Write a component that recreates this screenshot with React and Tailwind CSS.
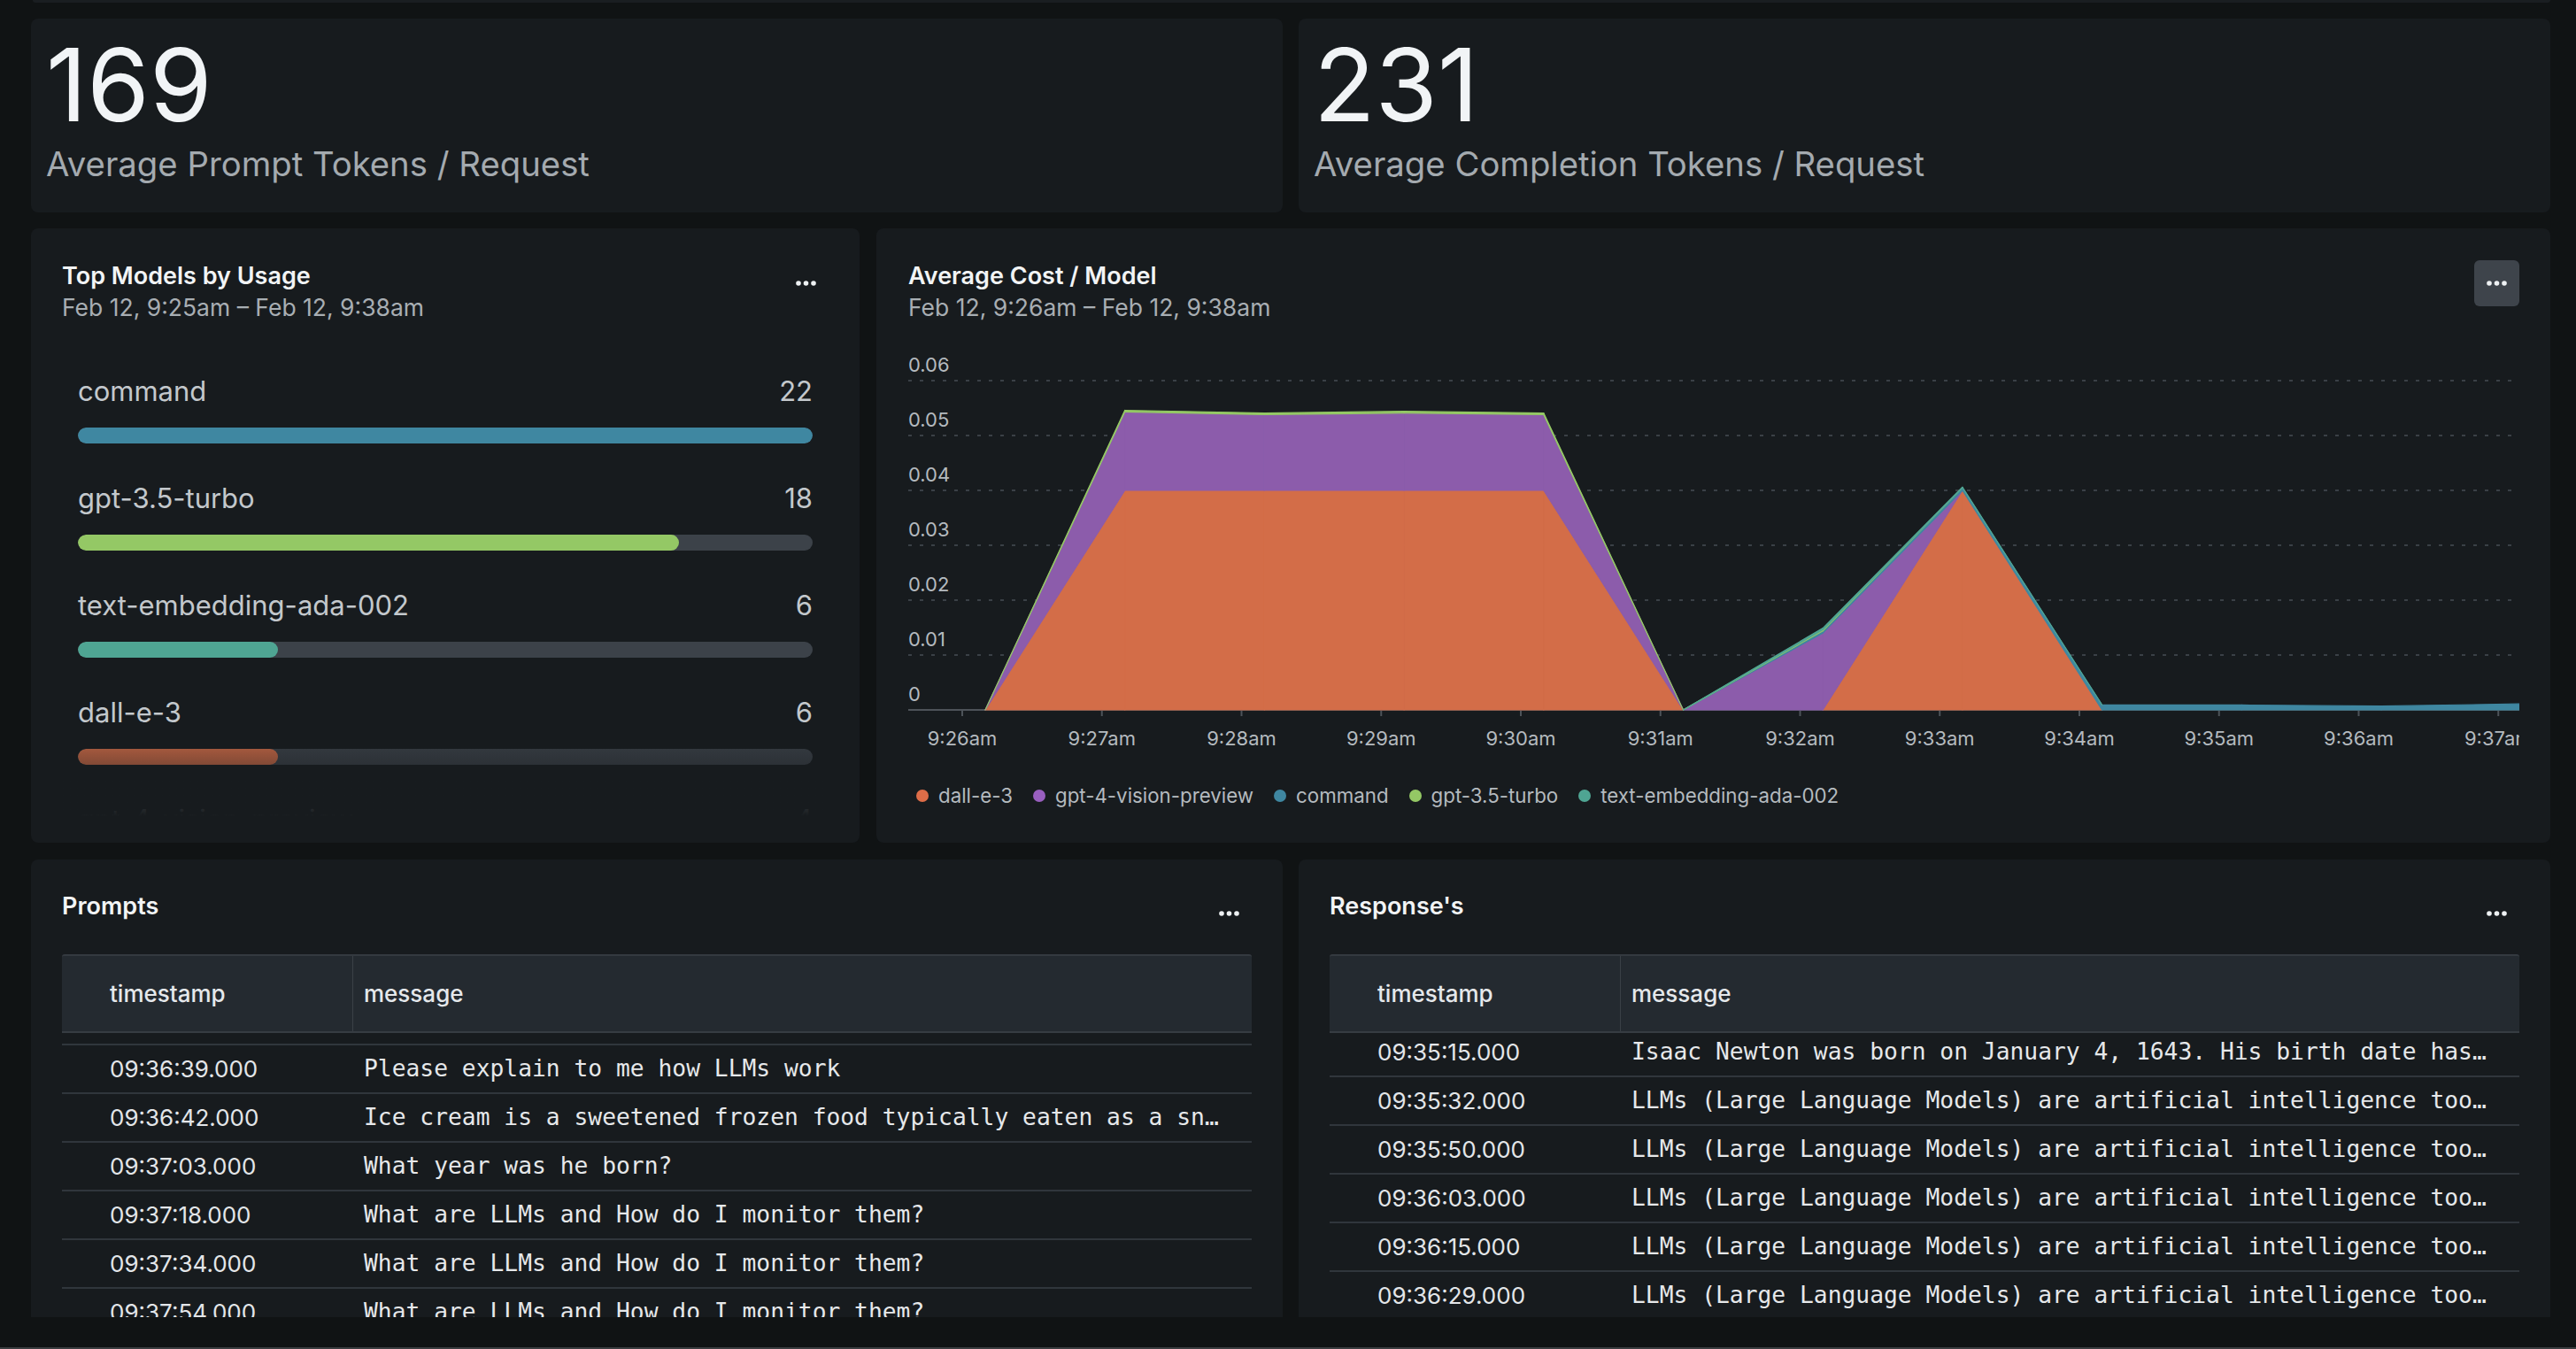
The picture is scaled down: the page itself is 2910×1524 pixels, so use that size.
import React from 'react';

const models = [
  { name: 'command', value: 22, color: 'bg-[#3f87a1]' },
  { name: 'gpt-3.5-turbo', value: 18, color: 'bg-[#94c865]' },
  { name: 'text-embedding-ada-002', value: 6, color: 'bg-[#4fa593]' },
  { name: 'dall-e-3', value: 6, color: 'bg-[#d36d48]' },
  { name: 'gpt-4-vision-preview', value: 4, color: 'bg-[#8c5cab]' },
];

const series = [
  { name: 'dall-e-3', color: '#d36d48', dot: 'bg-[#de6d48]', values: [0, 0.04, 0.04, 0.04, 0.04, 0, 0, 0.04, 0, 0, 0, 0] },
  { name: 'gpt-4-vision-preview', color: '#8c5cab', dot: 'bg-[#995fbf]', values: [0, 0.0143, 0.0138, 0.0141, 0.0138, 0, 0.014, 0, 0, 0, 0, 0] },
  { name: 'command', color: '#3f87a1', dot: 'bg-[#3f87a1]', values: [0, 0, 0, 0, 0, 0, 0.0004, 0.0005, 0.0009, 0.0009, 0.0007, 0.0011] },
  { name: 'gpt-3.5-turbo', color: '#94c865', dot: 'bg-[#94c865]', values: [0, 0.0003, 0.0003, 0.0003, 0.0003, 0, 0.0002, 0, 0, 0, 0, 0] },
  { name: 'text-embedding-ada-002', color: '#4fa593', dot: 'bg-[#4fa593]', values: [0, 0, 0, 0, 0, 0, 0.0003, 0.0001, 0, 0, 0, 0] },
];

const ticks = ['9:26am', '9:27am', '9:28am', '9:29am', '9:30am', '9:31am', '9:32am', '9:33am', '9:34am', '9:35am', '9:36am', '9:37am'];

const prompts = [
  ['09:36:21.000', 'What are LLMs and How do I monitor them?'],
  ['09:36:39.000', 'Please explain to me how LLMs work'],
  ['09:36:42.000', 'Ice cream is a sweetened frozen food typically eaten as a snack or dessert.'],
  ['09:37:03.000', 'What year was he born?'],
  ['09:37:18.000', 'What are LLMs and How do I monitor them?'],
  ['09:37:34.000', 'What are LLMs and How do I monitor them?'],
  ['09:37:54.000', 'What are LLMs and How do I monitor them?'],
];

const llm = 'LLMs (Large Language Models) are artificial intelligence tools that can read, summarize and generate text.';
const responses = [
  ['09:35:15.000', 'Isaac Newton was born on January 4, 1643. His birth date has been recorded differently over time.'],
  ['09:35:32.000', llm],
  ['09:35:50.000', llm],
  ['09:36:03.000', llm],
  ['09:36:15.000', llm],
  ['09:36:29.000', llm],
];

function Dots() {
  return (
    <svg width="23" height="6" viewBox="0 0 23 6" fill="currentColor">
      <circle cx="3" cy="3" r="2.8" />
      <circle cx="11.5" cy="3" r="2.8" />
      <circle cx="20" cy="3" r="2.8" />
    </svg>
  );
}

function MenuButton({ active = false }) {
  return (
    <button
      className={`w-[51px] h-[52px] shrink-0 rounded-[6px] flex items-center justify-center text-[#eef1f3] ${
        active ? 'bg-[#3e444b]' : ''
      }`}
    >
      <Dots />
    </button>
  );
}

function StatCard({ value, label }) {
  return (
    <div className="flex-1 bg-[#171b1e] rounded-[8px] pl-[17px] pt-[18px]">
      <div className="text-[114px] leading-[114px] text-[#f1f4f6]">{value}</div>
      <div className="mt-[13px] text-[38.3px] leading-[38px] text-[#a4aaaf]">{label}</div>
    </div>
  );
}

function CardHeader({ title, subtitle, active }) {
  return (
    <div className="flex items-start justify-between">
      <div>
        <div className="text-[27px] leading-[36px] font-semibold text-[#f2f4f5]">{title}</div>
        {subtitle && <div className="text-[26.5px] leading-[34px] text-[#a8aeb3]">{subtitle}</div>}
      </div>
      <MenuButton active={active} />
    </div>
  );
}

function TopModels() {
  const max = models[0].value;
  return (
    <div className="w-[936px] shrink-0 bg-[#171b1e] rounded-[8px] pt-[36px] px-[35px]">
      <CardHeader title="Top Models by Usage" subtitle="Feb 12, 9:25am – Feb 12, 9:38am" />
      {/* list fades out at the bottom */}
      <div className="relative mt-[58px] h-[500px] overflow-hidden px-[18px]">
        {models.map((m, i) => (
          <div key={m.name} className={i === 0 ? '' : 'mt-[42px]'}>
            <div className="h-[40px] flex items-center justify-between text-[31px] text-[#c3c8cc]">
              <span>{m.name}</span>
              <span>{m.value}</span>
            </div>
            <div className="mt-[21px] h-[18px] rounded-full bg-[#3c4249] overflow-hidden">
              <div className={`h-full rounded-full ${m.color}`} style={{ width: `${(m.value / max) * 100}%` }} />
            </div>
          </div>
        ))}
        <div className="absolute left-0 right-0 bottom-0 h-[102px] bg-linear-to-t from-[#171b1e] to-[#171b1e00]" />
      </div>
    </div>
  );
}

function CostChart() {
  const X0 = 87;
  const DX = 157.7;
  const yOf = (v) => 407 - v * 6200;
  let base = new Array(12).fill(0);
  const layers = series.map((s) => {
    const lower = base.slice();
    const upper = lower.map((b, i) => b + s.values[i]);
    base = upper;
    const quads = [];
    for (let i = 0; i < 11; i++) {
      if (s.values[i] > 0 || s.values[i + 1] > 0) {
        const xa = X0 + DX * i;
        const xb = X0 + DX * (i + 1);
        quads.push(`${xa},${yOf(upper[i])} ${xb},${yOf(upper[i + 1])} ${xb},${yOf(lower[i + 1])} ${xa},${yOf(lower[i])}`);
      }
    }
    return { ...s, quads };
  });

  return (
    <svg width="1820" height="465" viewBox="0 0 1820 465" className="block overflow-hidden">
      {[0.06, 0.05, 0.04, 0.03, 0.02, 0.01].map((v) => (
        <g key={v}>
          <text x="0" y={yOf(v) - 10} fontSize="22" fill="#b4babf" fontFamily="Inter, sans-serif">
            {v.toFixed(2)}
          </text>
          <line x1="0" x2="1820" y1={yOf(v)} y2={yOf(v)} stroke="#3a4046" strokeWidth="2" strokeDasharray="4 9" />
        </g>
      ))}
      <text x="0" y="397" fontSize="22" fill="#b4babf" fontFamily="Inter, sans-serif">0</text>
      <line x1="0" x2="1820" y1="407" y2="407" stroke="#4d5359" strokeWidth="2" />
      {ticks.map((t, i) => {
        const x = 61 + 157.75 * i;
        return (
          <g key={t}>
            <line x1={x} x2={x} y1="407" y2="414" stroke="#4d5359" strokeWidth="2" />
            <text x={x} y="447" fontSize="22" fill="#b4babf" textAnchor="middle" fontFamily="Inter, sans-serif">
              {t}
            </text>
          </g>
        );
      })}
      {layers.map((l) =>
        l.quads.map((q, j) => (
          <polygon key={l.name + j} points={q} fill={l.color} stroke={l.color} strokeWidth="1.2" strokeLinejoin="round" />
        ))
      )}
    </svg>
  );
}

function CostCard() {
  return (
    <div className="flex-1 bg-[#171b1e] rounded-[8px] pt-[36px] pl-[36px] pr-[35px]">
      <CardHeader title="Average Cost / Model" subtitle="Feb 12, 9:26am – Feb 12, 9:38am" active />
      <div className="mt-[31px]">
        <CostChart />
      </div>
      <div className="mt-[24px] pl-[9px] flex items-center gap-[23px] text-[22.3px] leading-[30px] text-[#b4babf]">
        {series.map((s) => (
          <div key={s.name} className="flex items-center gap-[11px]">
            <span className={`w-[14px] h-[14px] rounded-full ${s.dot}`} />
            <span>{s.name}</span>
          </div>
        ))}
      </div>
    </div>
  );
}

function LogCard({ title, rows, offset }) {
  return (
    <div className="flex-1 h-full bg-[#171b1e] rounded-t-[8px] pt-[35px] px-[35px] flex flex-col overflow-hidden">
      <CardHeader title={title} />
      <div className="mt-[20px] flex-1 min-h-0 flex flex-col">
        <div className="h-[89px] shrink-0 flex bg-[#242a30] border-t-2 border-b-2 border-t-[#343a40] border-b-[#363c42] rounded-t-[3px] text-[26px] font-medium text-[#e5e8eb]">
          <div className="w-[329px] shrink-0 pl-[54px] flex items-center border-r border-[#3a4046]">timestamp</div>
          <div className="flex-1 pl-[12px] flex items-center">message</div>
        </div>
        <div className="flex-1 min-h-0 overflow-hidden">
          <div className={offset}>
            {rows.map(([ts, msg], i) => (
              <div key={i} className="h-[55px] border-b-2 border-[#30363c] flex items-center">
                <div className="w-[329px] shrink-0 pl-[54px] text-[26px] text-[#e3e6e9]">{ts}</div>
                <div className="flex-1 min-w-0 pl-[12px] pr-[29px] truncate font-['DejaVu_Sans_Mono',monospace] text-[26.3px] text-[#e6e8ea]">
                  {msg}
                </div>
              </div>
            ))}
          </div>
        </div>
      </div>
    </div>
  );
}

export default function App() {
  return (
    <div className="w-[2910px] h-[1524px] bg-[#101314] overflow-hidden flex flex-col font-['Inter',sans-serif]">
      {/* bottom edge of the panel above */}
      <div className="h-[3px] shrink-0 ml-[37px] mr-[29px] bg-[#1a1e21] rounded-b-[3px]" />

      <div className="mt-[18px] h-[219px] shrink-0 flex gap-[18px] pl-[35px] pr-[29px]">
        <StatCard value="169" label="Average Prompt Tokens / Request" />
        <StatCard value="231" label="Average Completion Tokens / Request" />
      </div>

      <div className="mt-[18px] h-[694px] shrink-0 flex gap-[19px] pl-[35px] pr-[29px]">
        <TopModels />
        <CostCard />
      </div>

      <div className="mt-[19px] h-[517px] shrink-0 flex gap-[18px] pl-[35px] pr-[29px]">
        <LogCard title="Prompts" rows={prompts} offset="mt-[-41px]" />
        <LogCard title="Response's" rows={responses} offset="mt-[-5px]" />
      </div>

      <div className="flex-1" />
      <div className="h-[2px] shrink-0 bg-[#3a3d40]" />
    </div>
  );
}
